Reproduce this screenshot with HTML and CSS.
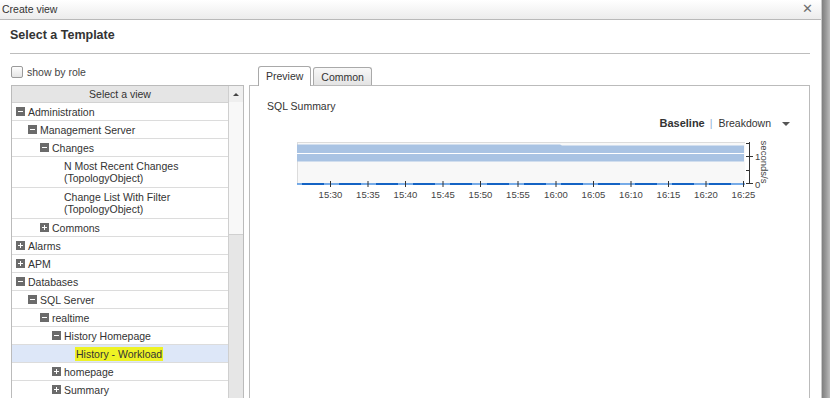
FILE: index.html
```html
<!DOCTYPE html>
<html lang="en">
<head>
    <meta charset="UTF-8">
    <meta name="viewport" content="width=device-width, initial-scale=1.0">
    <title>Create view</title>
    <link rel="stylesheet" href="styles.css">
</head>
<body>
    <div class="dialog">
        <div class="titlebar">
            <span>Create view</span>
            <span class="close">&#x2715;</span>
        </div>
        <h1 class="heading">Select a Template</h1>
        <hr class="rule">

        <div class="main">
            <!-- left side: view tree -->
            <div class="left">
                <label class="check-row"><span class="checkbox"></span>show by role</label>
                <div class="tree">
                    <div class="tree-list">
                        <div class="tree-header">Select a view</div>
                        <div class="row l0"><span class="toggle minus"></span>Administration</div>
                        <div class="row l1"><span class="toggle minus"></span>Management Server</div>
                        <div class="row l2"><span class="toggle minus"></span>Changes</div>
                        <div class="row l3 multi"><span class="leaf"></span><span class="label">N Most Recent Changes<br>(TopologyObject)</span></div>
                        <div class="row l3 multi"><span class="leaf"></span><span class="label">Change List With Filter<br>(TopologyObject)</span></div>
                        <div class="row l2"><span class="toggle plus"></span>Commons</div>
                        <div class="row l0"><span class="toggle plus"></span>Alarms</div>
                        <div class="row l0"><span class="toggle plus"></span>APM</div>
                        <div class="row l0"><span class="toggle minus"></span>Databases</div>
                        <div class="row l1"><span class="toggle minus"></span>SQL Server</div>
                        <div class="row l2"><span class="toggle minus"></span>realtime</div>
                        <div class="row l3"><span class="toggle minus"></span>History Homepage</div>
                        <div class="row l4 selected"><span class="leaf"></span><span class="marker">History - Workload</span></div>
                        <div class="row l3"><span class="toggle plus"></span>homepage</div>
                        <div class="row l3"><span class="toggle plus"></span>Summary</div>
                    </div>
                    <div class="scroll">
                        <div class="scroll-up"><span class="arrow-up"></span></div>
                        <div class="scroll-thumb"></div>
                    </div>
                </div>
            </div>

            <!-- right side: tabs with preview -->
            <div class="right">
                <div class="tabs">
                    <div class="tab active">Preview</div>
                    <div class="tab">Common</div>
                </div>
                <div class="panel">
                    <div class="chart-title">SQL Summary</div>
                    <div class="chart-mode">
                        <b>Baseline</b><span class="sep">|</span>Breakdown<span class="caret"></span>
                    </div>
                    <svg class="chart" width="559" height="66" viewBox="0 0 559 66">
                        <rect x="47" y="5" width="448" height="42" fill="#f8f8f8"/>
                        <line x1="47" y1="5.5" x2="495" y2="5.5" stroke="#dcdcdc"/>
                        <line x1="47.5" y1="5" x2="47.5" y2="47" stroke="#dcdcdc"/>
                        <path d="M47 7.5 H310 L312 8.5 H494 V24.5 H47 Z" fill="#a9c3e3"/>
                        <line x1="47" y1="16.5" x2="494" y2="16.5" stroke="#ffffff"/>

                        <line x1="499.5" y1="5" x2="499.5" y2="47" stroke="#333"/>
                        <g stroke="#333">
                            <line x1="496" y1="6.5" x2="499" y2="6.5"/>
                            <line x1="496" y1="19.5" x2="503" y2="19.5"/>
                            <line x1="496" y1="33.5" x2="499" y2="33.5"/>
                            <line x1="496" y1="46.5" x2="503" y2="46.5"/>
                        </g>
                        <g class="axis-text">
                            <text x="505" y="23">1</text>
                            <text x="505" y="51">0</text>
                            <text transform="translate(511,25) rotate(90)" text-anchor="middle">seconds/s</text>
                        </g>

                        <line x1="47" y1="47" x2="495" y2="47" stroke="#4a90e2" stroke-width="1.5"/>
                        <line x1="52" y1="47" x2="495" y2="47" stroke="#1463c4" stroke-width="2" stroke-dasharray="22 15"/>

                        <g stroke="#333">
                            <line x1="80.5" y1="44" x2="80.5" y2="50"/>
                            <line x1="118" y1="44" x2="118" y2="50"/>
                            <line x1="155.5" y1="44" x2="155.5" y2="50"/>
                            <line x1="193" y1="44" x2="193" y2="50"/>
                            <line x1="230.5" y1="44" x2="230.5" y2="50"/>
                            <line x1="268" y1="44" x2="268" y2="50"/>
                            <line x1="306" y1="44" x2="306" y2="50"/>
                            <line x1="343.5" y1="44" x2="343.5" y2="50"/>
                            <line x1="381" y1="44" x2="381" y2="50"/>
                            <line x1="418.5" y1="44" x2="418.5" y2="50"/>
                            <line x1="456" y1="44" x2="456" y2="50"/>
                            <line x1="493.5" y1="44" x2="493.5" y2="50"/>
                        </g>
                        <g class="axis-text" text-anchor="middle">
                            <text x="80.5" y="61">15:30</text>
                            <text x="118" y="61">15:35</text>
                            <text x="155.5" y="61">15:40</text>
                            <text x="193" y="61">15:45</text>
                            <text x="230.5" y="61">15:50</text>
                            <text x="268" y="61">15:55</text>
                            <text x="306" y="61">16:00</text>
                            <text x="343.5" y="61">16:05</text>
                            <text x="381" y="61">16:10</text>
                            <text x="418.5" y="61">16:15</text>
                            <text x="456" y="61">16:20</text>
                            <text x="493.5" y="61">16:25</text>
                        </g>
                    </svg>
                </div>
            </div>
        </div>
    </div>
    <div class="shadow"></div>
</body>
</html>
```

FILE: styles.css
```css
body{
    margin: 0;
    display: flex;
    height: 398px;
    overflow: hidden;
    background-color: white;
    color: #333;
    font-family: "Liberation Sans", Arial, sans-serif;
    font-size: 10.5px;
}
.dialog{
    width: 821px;
    border-right: 1px solid #c9c9c9;
    display: flex;
    flex-direction: column;
}
.shadow{
    flex: 1;
    background: linear-gradient(to right, #7f7f7f, #9a9a9a 50%, #bcbcbc);
}
.titlebar{
    height: 19px;
    line-height: 19px;
    padding-left: 2px;
    display: flex;
    justify-content: space-between;
    background: linear-gradient(#ffffff, #ececec);
    border-bottom: 1px solid #b9b9b9;
}
.close{
    padding-right: 8px;
    color: #6f6f6f;
    font-size: 12.5px;
}
.heading{
    margin: 0;
    padding: 7px 0 0 10px;
    font-size: 12.5px;
    line-height: 16px;
    font-weight: bold;
    color: #333;
}
.rule{
    margin: 10px 11px 0 10px;
    border: none;
    border-top: 1px solid #bdbdbd;
}
.main{
    flex: 1;
    display: flex;
    gap: 5px;
    margin-top: 12px;
    padding: 0 11px;
    min-height: 0;
}
.left{
    width: 233px;
    display: flex;
    flex-direction: column;
}
.check-row{
    height: 12px;
    margin-bottom: 7px;
    display: flex;
    align-items: center;
    gap: 4px;
    color: #444;
}
.checkbox{
    width: 10px;
    height: 10px;
    border: 1px solid #9a9a9a;
    border-radius: 2px;
    background: linear-gradient(#fdfdfd, #e4e4e4);
}
.tree{
    flex: 1;
    display: flex;
    border: 1px solid #bbb;
    border-bottom: none;
    overflow: hidden;
}
.tree-list{
    flex: 1;
}
.tree-header{
    height: 16px;
    line-height: 16px;
    text-align: center;
    background-color: #e5e5e5;
    border-bottom: 1px solid #d2d2d2;
}
.row{
    display: flex;
    align-items: center;
    height: 17px;
    border-bottom: 1px solid #dcdcdc;
    white-space: nowrap;
}
.row.multi{
    height: 30px;
    align-items: flex-start;
}
.row.multi .label{
    line-height: 12px;
    padding-top: 3px;
}
.l0{ padding-left: 4px; }
.l1{ padding-left: 16px; }
.l2{ padding-left: 28px; }
.l3{ padding-left: 40px; }
.l4{ padding-left: 52px; }
.toggle{
    position: relative;
    width: 9px;
    height: 9px;
    margin-right: 3px;
    background-color: #6b6b6b;
    flex-shrink: 0;
}
.toggle::before{
    content: "";
    position: absolute;
    left: 2px;
    top: 4px;
    width: 5px;
    height: 1px;
    background-color: white;
}
.toggle.plus::after{
    content: "";
    position: absolute;
    left: 4px;
    top: 2px;
    width: 1px;
    height: 5px;
    background-color: white;
}
.leaf{
    width: 12px;
    flex-shrink: 0;
}
.selected{
    background-color: #dde7f8;
}
.marker{
    background-color: #eef224;
    padding: 1px 1px;
    margin-left: -1px;
}
.scroll{
    width: 14px;
    border-left: 1px solid #cfcfcf;
    background-color: #f8f8f8;
    display: flex;
    flex-direction: column;
}
.scroll-up{
    height: 16px;
    display: flex;
    justify-content: center;
    align-items: center;
    background-color: #efefef;
}
.arrow-up{
    width: 0;
    height: 0;
    border-left: 3px solid transparent;
    border-right: 3px solid transparent;
    border-bottom: 3px solid #444;
}
.scroll-thumb{
    flex: 1;
    margin-top: 132px;
    background-color: #e6e6e6;
    border-top: 1px solid #d0d0d0;
}
.right{
    flex: 1;
    display: flex;
    flex-direction: column;
}
.tabs{
    height: 19px;
    display: flex;
    align-items: flex-end;
    gap: 2px;
    padding-left: 9px;
}
.tab{
    height: 17px;
    line-height: 18px;
    padding: 0 7px;
    border: 1px solid #a9a9a9;
    border-bottom: none;
    border-radius: 3px 3px 0 0;
    background: linear-gradient(#f8f8f8, #e3e3e3);
    color: #333;
}
.tab.active{
    position: relative;
    height: 19px;
    margin-bottom: -1px;
    background: white;
}
.panel{
    flex: 1;
    border: 1px solid #bbb;
    border-bottom: none;
}
.chart-title{
    padding: 14px 0 0 17px;
    line-height: 12px;
}
.chart-mode{
    margin-top: 5px;
    padding-right: 19px;
    line-height: 12px;
    text-align: right;
    color: #333;
}
.chart-mode b{
    font-size: 11px;
}
.sep{
    margin: 0 6px 0 5px;
    color: #8fb0d4;
}
.caret{
    display: inline-block;
    margin-left: 11px;
    vertical-align: middle;
    width: 0;
    height: 0;
    border-left: 4px solid transparent;
    border-right: 4px solid transparent;
    border-top: 4px solid #555;
}
.chart{
    display: block;
    margin-top: 8px;
}
.axis-text{
    font-family: "Liberation Sans", Arial, sans-serif;
    font-size: 9.5px;
    fill: #444;
}
```
